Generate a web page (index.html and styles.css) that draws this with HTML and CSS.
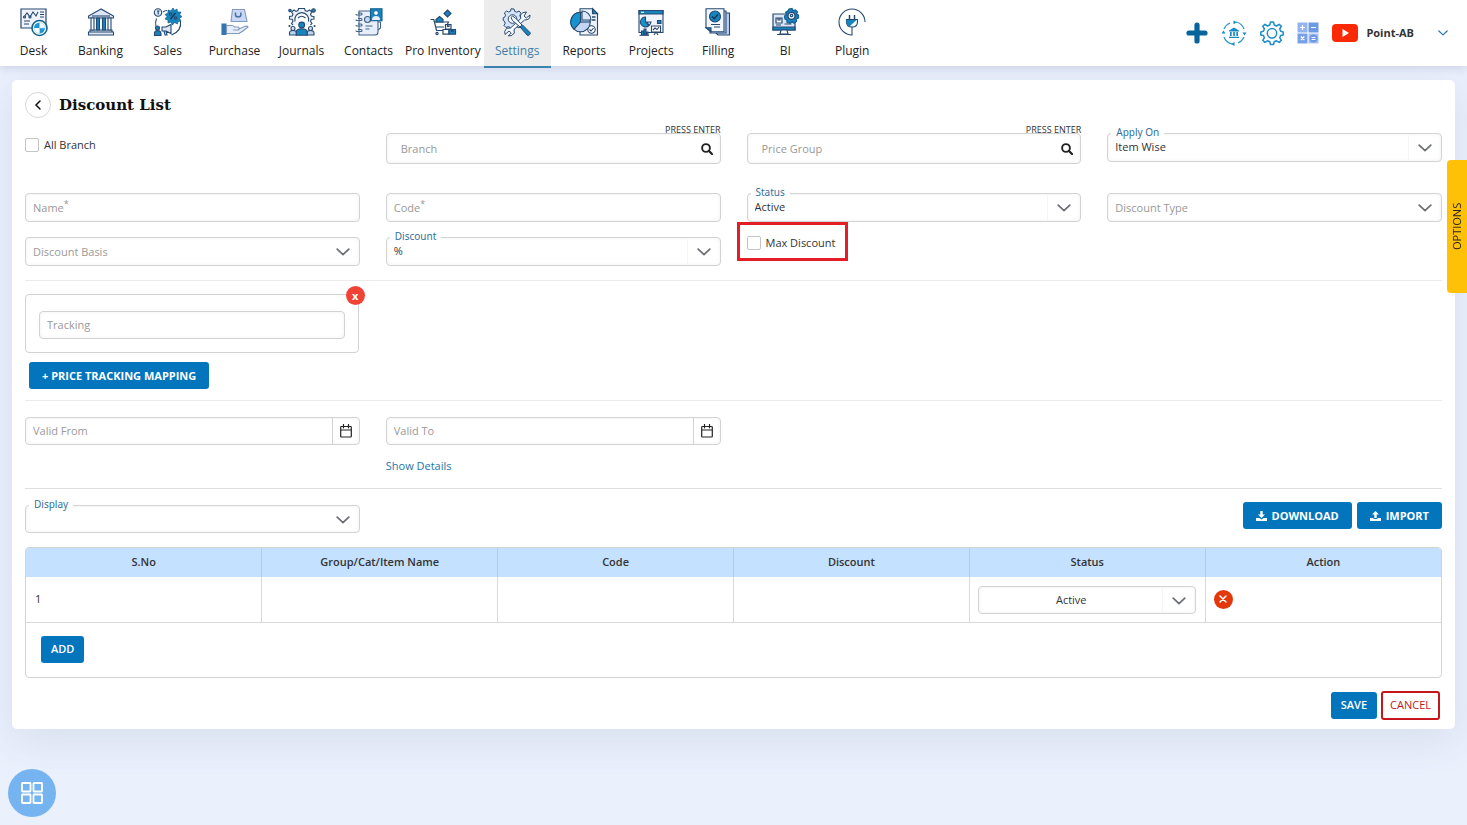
FILE: index.html
```html
<!DOCTYPE html>
<html lang="en">
<head>
<meta charset="utf-8">
<title>Discount List</title>
<meta name="viewport" content="width=device-width, initial-scale=1">
<link rel="stylesheet" href="styles.css">
</head>
<body>
<svg class="defs" aria-hidden="true">
  <symbol id="chevron" viewBox="0 0 14 8"><path d="M1.2 1.2 7 6.6l5.800-5.400" fill="none" stroke="currentColor" stroke-width="1.700" stroke-linecap="round" stroke-linejoin="round"/></symbol>
  <symbol id="search" viewBox="0 0 12 12"><circle cx="5" cy="5" r="3.900" fill="none" stroke="currentColor" stroke-width="1.900"/><path d="m8 8 3.200 3.200" stroke="currentColor" stroke-width="2.200" stroke-linecap="round"/></symbol>
  <symbol id="calendar" viewBox="0 0 12 14"><path d="M1.500 2.500h9q.8 0 .8.8v8.900q0 .8-.8.8h-9q-.8 0-.8-.8V3.300q0-.8.8-.8ZM.7 6h10.600M3.500.5v3.300M8.500.5v3.300" fill="none" stroke="currentColor" stroke-width="1.200" stroke-linecap="round"/></symbol>
</svg>

<header class="topbar">
  <nav class="nav" aria-label="Main">
    <a class="nav-item" href="#">
      <svg class="nav-icon" viewBox="0 0 28 28" fill="none" stroke="#27496f" stroke-width="1.200"><path fill="#eef3fd" d="M1 1h25v19H1z"/><path d="m4 9 3-4 3 4 3-5 3 4 2-4M20 4h4M20 6.500h4M20 9h4M4 13h6M4 16h5" stroke-width="1.100"/><circle cx="4.500" cy="9" r="1" fill="#fff"/><circle cx="10" cy="9" r="1" fill="#fff"/><circle cx="19.500" cy="20" r="7.500" fill="#fff" stroke="#14628f" stroke-width="1.600"/><path d="M19.500 14.500V20H14a5.500 5.500 0 0 1 5.500-5.500ZM19.500 25.500V20H25a5.500 5.500 0 0 1-5.500 5.500Z" fill="#1c96d2" stroke="none"/><path d="M19.500 14.500A5.500 5.500 0 0 1 25 20h-5.500M14 20a5.500 5.500 0 0 0 5.500 5.500V20" stroke="#a5d8f2" stroke-width=".8"/></svg>
      <span>Desk</span></a>
    <a class="nav-item" href="#">
      <svg class="nav-icon" viewBox="0 0 28 28" fill="none" stroke="#27496f" stroke-width="1.100"><path fill="#dce6f7" d="M14 1 1.500 8v2h25V8ZM1.500 24h25v3h-25ZM3 22h22v2H3Z"/><path d="M5 8h18" /><path fill="#f4f8ff" d="M4 10h3v12H4zM21 10h3v12h-3z"/><path fill="#1684bd" d="M9.500 10h3v12h-3zM15.500 10h3v12h-3z"/></svg>
      <span>Banking</span></a>
    <a class="nav-item" href="#">
      <svg class="nav-icon" viewBox="0 0 28 28" fill="none" stroke="#27496f" stroke-width="1.100"><path d="M2.500 10.500a13 13 0 0 0-.5 8M9 4q2-1.500 4-1.500M26.500 13q1.500 10-9 14"/><path d="m19 0 1.500 2.500L23 1l.5 3L27 4l-1.500 3 2.500 1.500-2.500 2L27 13l-3 .5-.5 2.500-3-1.500L18.500 17 17 14l-3 1v-3l-3-1 2-2.500-2-2L14 5V2l3 1Z" fill="#1684bd" stroke="#145d8d" stroke-width=".7"/><path d="m16.500 11 5-6" stroke="#163558" stroke-width="1.300"/><circle cx="16.500" cy="6" r="1.200"/><circle cx="21.500" cy="10" r="1.200"/><circle cx="4" cy="4.500" r="3.700" fill="#dce6f7"/><path d="M3 3h2.500M4.200 3v3.500"/><circle cx="3.500" cy="20" r="2" fill="#1684bd"/><path d="M.5 27.500v-2q0-3 3-3t3.500 3v2Z" fill="#1684bd"/><path d="M8 19h4l5-2.500v9L12 23H8ZM10 23l1 4h2l-1-4" fill="#dce6f7"/></svg>
      <span>Sales</span></a>
    <a class="nav-item" href="#">
      <svg class="nav-icon" viewBox="0 0 28 28" fill="none" stroke="#7f9abd" stroke-width="1.100"><path d="M11.500 1.500h12L26 13.500H10Z" fill="#c9d8f6"/><path d="M14.500 4.500v2.500q0 1.800 2.700 1.800t2.700-1.800V4.500" stroke="#47719d" stroke-width="1.500"/><path d="M1 16h4v10.500H1z" fill="#3475b0" stroke="#3475b0"/><path d="M5.500 17.500h5q2 0 3 1.500h3.500q1.500.3 1 2l6-2.700q2.500-.5 3 .7-4 3.500-9 6.500H5.500Z" fill="#e8eefb"/><path d="M12 22h5.500l.5-1"/></svg>
      <span>Purchase</span></a>
    <a class="nav-item" href="#">
      <svg class="nav-icon" viewBox="0 0 28 28" fill="none" stroke="#27496f" stroke-width="1.100"><path d="M5 17 3.500 15.500 5 13.300l-.8-2L1.500 11V8.500L4.200 8l.8-2-1.500-2L6 2l2 1.400L10 2.500l.5-2h6l.7 2L19.200 3.400 21.500 2 24 4l-1.500 2 .8 2 2.700.6V11l-2.700.3-.8 2 1.500 2.200L22.500 17" fill="#edf2fc"/><path d="M7 13.500a7 7 0 1 1 13.500 0" fill="#fff"/><path d="M10 10q3.500-3.500 7.500 0"/><g fill="#1684bd"><circle cx="2" cy="2.500" r="1.200"/><circle cx="25.500" cy="2.500" r="1.800"/><circle cx="1.500" cy="18" r=".5"/><circle cx="26.500" cy="18" r=".5"/></g><circle cx="5" cy="20.500" r="2" fill="#dce6f7"/><circle cx="22.500" cy="20.500" r="2" fill="#dce6f7"/><circle cx="13.700" cy="17" r="2.900" fill="#1684bd"/><path d="M1.500 27v-2q0-2.500 3.500-2.500t3.500 2.500v2ZM19 27v-2q0-2.500 3.500-2.500T26 25v2Z" fill="#bdd2f0"/><path d="M8.200 27.300v-3q0-3.500 5.500-3.500t5.500 3.500v3Z" fill="#1684bd"/></svg>
      <span>Journals</span></a>
    <a class="nav-item" href="#">
      <svg class="nav-icon" viewBox="0 0 28 28" fill="none" stroke="#446487" stroke-width="1.100"><path d="M4 3h16q3 0 3 3v18q0 3-3 3H4Z" fill="#e8effc"/><path d="M23 14h2.500v6L23 22M3 5h3q1 0 1 1T6 7H2q-1 0-1-1M3 10.500h3q1 0 1 1t-1 1H2q-1 0-1-1M3 16h3q1 0 1 1t-1 1H2q-1 0-1-1M3 21.500h3q1 0 1 1t-1 1H2q-1 0-1-1M10.500 18h7M10.500 21h4"/><circle cx="12.500" cy="11.500" r="3" fill="#c9daf3"/><path d="M15.500.7H27v12H15.500Z" fill="#1684bd" stroke="#145d8d"/><circle cx="21" cy="5" r="2.300" fill="#fff" stroke="#145d8d" stroke-width=".7"/><path d="M17 12q0-4 4-4t4 4Z" fill="#e8effc" stroke="none"/></svg>
      <span>Contacts</span></a>
    <a class="nav-item" href="#">
      <svg class="nav-icon" viewBox="0 0 28 28" fill="none" stroke="#27496f" stroke-width="1.200"><path d="M1.500 11.500h3.300l2.700 11H15M5.500 14H19.500L18.500 16M6.500 19H15"/><circle cx="8" cy="25.500" r="1.100"/><path d="M18.500 2 22 5.500 18.500 9 15 5.500Z" fill="#1684bd"/><path d="m10.500 8.500 3.500 3V14H7v-2.500Z" fill="#1684bd"/><path d="M16.500 16.500h5.500V21h-5.500ZM14 21.500h6v4.700h-6Z" fill="#fff"/><path d="M20 21.500h6.500v4.700H20Z" fill="#1684bd"/><path d="M18.500 16.500v2H20v-2M22.500 21.500v2H24v-2"/></svg>
      <span>Pro Inventory</span></a>
    <a class="nav-item is-active" href="#" aria-current="page">
      <svg class="nav-icon" viewBox="0 0 28 28" fill="none" stroke="#27496f" stroke-width="1"><path d="m8 .8 3 .2.7 2.400 2 .8 2.300-1.200 2 2.200-1.200 2.300.8 2 2.400.7v3l-2.400.7-.8 2 1.200 2-2 2-2.300-1.200-2 .8-.7 2.500H8l-.7-2.500-2-.8L3 19.500l-2-2 1.200-2.300-.8-2L.2 12.500V9.800l1.500-.6.9-2-1.200-2.300L3.500 3l2 1 2-.8Z" fill="#d6e3fa"/><circle cx="9.500" cy="11" r="4.300" fill="#f8faff"/><path d="m27 7-3.700 3-2.300-2 2.500-4q-4-.3-6 3l.3 3.500L7.500 20l-3.800.3Q.7 23 2 26.500L6 23l2.300 2-3 3q4 .5 6-3l-.3-3.500L21.500 12q6 0 5.500-5Z" fill="#f7faff"/><path d="M9.500 12.500 8 9.500l1.500-1.400L12.500 10l6.500 7-2 2Z" fill="#f7faff"/><path d="m17 19 2.500-2 7.500 7.500q.8 1-.5 2.300t-2.500.2Z" fill="#1684bd"/></svg>
      <span>Settings</span></a>
    <a class="nav-item" href="#">
      <svg class="nav-icon" viewBox="0 0 28 28" fill="none" stroke="#27496f" stroke-width="1.100"><path d="M10 .7h12.500l5 5V27H10Z" fill="#eef3fd"/><path d="M22.500.7v5h5Z" fill="#1684bd"/><path d="M22 9h3.500M22 12h3.500" stroke-width="1.500"/><circle cx="21.500" cy="21.500" r="3.700" fill="#fff"/><path d="m19.500 21.500 1.500 1.500 2.500-3"/><circle cx="10.500" cy="14" r="9.800" fill="#c5d6f4"/><path d="M10.500 4.200V14l-6.500 7.200A9.800 9.800 0 0 1 10.500 4.200Z" fill="#1794d0"/><path d="M10.500 14h9.800"/><path d="M12 3a9 9 0 0 1 9 9h-9Z" fill="#dfe9fb"/></svg>
      <span>Reports</span></a>
    <a class="nav-item" href="#">
      <svg class="nav-icon" viewBox="0 0 28 28" fill="none" stroke="#27496f" stroke-width="1.100"><path d="M2 2.500h24v22H2Z" fill="#f0f5fd"/><path d="M2 2.500h24V6H2Z" fill="#1684bd"/><path d="M4 4.300h3" stroke="#fff"/><path d="M8.500 9v5l3.500 3.500A5 5 0 1 1 8.500 9Z" fill="#1794d0"/><path d="M10 14h4a5 5 0 0 1-2 3.500Z" fill="#c5d6f4"/><path d="M20.500 12.500H24v3h-3.500Z" fill="#1684bd"/><path d="M14.500 18h9v6h-9ZM17 27l2-3 2 3M16 22l2-2 2 1.500 2-2.500" fill="#fff"/><path d="M4.500 27v-4h2v4M7 27v-6h2v6M9.500 27v-3h1.500v3" fill="#1684bd"/><path d="M2.500 27.300H12"/></svg>
      <span>Projects</span></a>
    <a class="nav-item" href="#">
      <svg class="nav-icon" viewBox="0 0 28 28" fill="none" stroke="#27496f" stroke-width="1.100"><path d="M9 5h16.500v22H14l-5-5Z" fill="#bdd0f3"/><path d="M6 3h16v22H6Z" fill="#cfdef8"/><path d="M2 .7h18v23H7l-5-4Z" fill="#f2f6fe"/><path d="M2 19.700h5v4Z" fill="#1684bd"/><circle cx="11" cy="8.500" r="5.500" fill="#1684bd"/><path d="m8 8.500 2.200 2.200L14 6.500" stroke="#163558" stroke-width="1.500"/><path d="M7 16.500h9M10 19h6"/></svg>
      <span>Filling</span></a>
    <a class="nav-item" href="#">
      <svg class="nav-icon" viewBox="0 0 28 28" fill="none" stroke="#27496f" stroke-width="1.200"><path d="M2 6h22v16H2Z" fill="#dce7fa"/><path d="M2 19h22v3H2Z" fill="#1684bd"/><path d="M10 22h6l1 4H9ZM6 26.500h14M5 10h6v5H5ZM7 10v2h2v-2M13.500 16h7M5 17h5" fill="#fff"/><path d="m18 1 3-.5 1 2 2.500-.5L26.500 4l-1 2 2 1.200V10l-2.300.8.3 2.500-2.500 2-2-1.500-2 1.500-3-1-.2-2.500L14 11l-.5-3 2-1.300-.8-2.400 2.300-1.500Z" fill="#1684bd" stroke="#145d8d"/><circle cx="20.500" cy="7.800" r="3.500" fill="#edf4ff"/><circle cx="20.500" cy="7.500" r="1.200"/></svg>
      <span>BI</span></a>
    <a class="nav-item" href="#">
      <svg class="nav-icon" viewBox="0 0 28 28" fill="none" stroke="#27496f" stroke-width="1.100"><path d="M27 14A13 13 0 1 0 14 27v-8"/><path d="M8.500 11.500h11V14q0 5-5.500 5t-5.500-5Z" fill="#f5f8ff"/><path d="M8.500 12h10l-7 6.500q-3-1.500-3-4.500Z" fill="#1684bd" stroke="none"/><path d="M11.500 7v4.500M16.500 7v4.500" stroke-width="1.500"/></svg>
      <span>Plugin</span></a>
  </nav>

  <div class="tools">
    <button class="tool" type="button" aria-label="Create"><svg width="22" height="22" viewBox="0 0 22 22"><path d="M11 3v16M3 11h16" stroke="#07659c" stroke-width="5.200" stroke-linecap="round"/></svg></button>
    <button class="tool" type="button" aria-label="Bank sync"><svg width="26" height="26" viewBox="0 0 26 26" fill="none" stroke="#2a98d0" stroke-width="1.200"><path d="M3 9a11 11 0 0 1 6-6M15 2a11 11 0 0 1 8 7M23 17a11 11 0 0 1-6 6M11 24a11 11 0 0 1-8-7" /><g fill="#168bc7" stroke="none"><path d="m12.500.5 3.500 1.700-3.500 2ZM21.500 12.500h4l-2 3ZM13.500 22v4L10 24ZM.5 13.500h4l-2-3ZM13 7.500l5 3v1H8v-1ZM9 12h1.700v4H9ZM12.200 12h1.700v4h-1.700ZM15.300 12H17v4h-1.700ZM8 16.700h10v1.300H8Z"/></g></svg></button>
    <button class="tool" type="button" aria-label="Preferences"><svg width="24" height="24" viewBox="0 0 24 24" fill="none" stroke="#1c8dc8" stroke-width="1.500" stroke-linejoin="round"><path d="M10.500 1h3l.7 3 2.300 1 2.700-1.700 2.100 2.100L19.700 8l1 2.300 2.500.6v3l-2.500.6-1 2.200 1.600 2.600-2.100 2.100-2.700-1.600-2.300 1-.7 2.700h-3l-.7-2.700-2.300-1-2.600 1.600-2.100-2.100 1.600-2.600-1-2.200-2.600-.6v-3l2.600-.6 1-2.300-1.600-2.600 2.100-2.100L7.500 5l2.300-1Z"/><circle cx="12" cy="12.300" r="4.700"/></svg></button>
    <button class="tool" type="button" aria-label="Calculator"><svg width="22" height="22" viewBox="0 0 22 22"><path d="M.5.5h10v10H.5z" fill="#92b3ef"/><path d="M11.500.5h10v10h-10z" fill="#6c9be5"/><path d="M.5 11.500h10v10H.5z" fill="#789fe8"/><path d="M11.500 11.500h10v10h-10z" fill="#a8c1f0"/><circle cx="16.500" cy="16.500" r="4" fill="#6c97e2"/><path d="M5.500 3v5M3 5.500h5M14 5.500h5M3.800 14.500l3.500 3.500M7.300 14.500 3.800 18M14.500 15.500h4M14.500 17.500h4" stroke="#fff" stroke-width="1.200"/></svg></button>
    <a class="tool" href="#" aria-label="Video tutorials"><svg width="26" height="18" viewBox="0 0 26 18"><rect width="26" height="18" rx="4" fill="#fb2a06"/><path d="m10.500 5 6.500 4-6.500 4Z" fill="#fff"/></svg></a>
    <button class="account" type="button"><span>Point-AB</span><svg width="10" height="6"><use href="#chevron"/></svg></button>
  </div>
</header>

<main class="card">
  <div class="title-row">
    <button class="back" type="button" aria-label="Back"><svg width="6" height="10" viewBox="0 0 6 10"><path d="M5 1 1 5l4 4" fill="none" stroke="#111" stroke-width="1.500" stroke-linecap="round"/></svg></button>
    <h1>Discount List</h1>
  </div>

  <form>
    <section class="grid scope-row">
      <label class="check check-branch"><input type="checkbox"><span>All Branch</span></label>
      <div class="field search">
        <span class="hint">PRESS ENTER</span>
        <input type="text" placeholder="Branch" aria-label="Branch">
        <button class="icon-btn" type="button" aria-label="Search branch"><svg width="12" height="12"><use href="#search"/></svg></button>
      </div>
      <div class="field search">
        <span class="hint">PRESS ENTER</span>
        <input type="text" placeholder="Price Group" aria-label="Price Group">
        <button class="icon-btn" type="button" aria-label="Search price group"><svg width="12" height="12"><use href="#search"/></svg></button>
      </div>
      <div class="field select split">
        <label class="float" for="apply">Apply On</label>
        <select id="apply"><option>Item Wise</option></select>
        <svg class="arrow"><use href="#chevron"/></svg>
      </div>
    </section>

    <section class="grid detail-rows">
      <div class="field"><input id="name" type="text" required><label class="inside" for="name">Name<sup>*</sup></label></div>
      <div class="field"><input id="code" type="text" required><label class="inside" for="code">Code<sup>*</sup></label></div>
      <div class="field select split">
        <label class="float" for="status">Status</label>
        <select id="status"><option>Active</option></select>
        <svg class="arrow"><use href="#chevron"/></svg>
      </div>
      <div class="field select">
        <select class="empty" aria-label="Discount Type"><option>Discount Type</option></select>
        <svg class="arrow"><use href="#chevron"/></svg>
      </div>
      <div class="field select">
        <select class="empty" aria-label="Discount Basis"><option>Discount Basis</option></select>
        <svg class="arrow"><use href="#chevron"/></svg>
      </div>
      <div class="field select split">
        <label class="float" for="discount">Discount</label>
        <select id="discount"><option>%</option></select>
        <svg class="arrow"><use href="#chevron"/></svg>
      </div>
      <div class="max-cell"><label class="check"><input type="checkbox"><span>Max Discount</span></label></div>
    </section>

    <section class="tracking">
      <div class="grid">
        <div class="tracking-box">
          <div class="field"><input type="text" placeholder="Tracking" aria-label="Tracking"></div>
          <button class="remove" type="button" aria-label="Remove tracking">x</button>
        </div>
      </div>
      <button class="btn btn-wide btn-mapping" type="button">+ PRICE TRACKING MAPPING</button>
    </section>

    <section class="grid validity">
      <div class="field date"><input type="text" placeholder="Valid From" aria-label="Valid From"><button class="icon-btn" type="button" aria-label="Pick start date"><svg width="12" height="14"><use href="#calendar"/></svg></button></div>
      <div class="valid-to">
        <div class="field date"><input type="text" placeholder="Valid To" aria-label="Valid To"><button class="icon-btn" type="button" aria-label="Pick end date"><svg width="12" height="14"><use href="#calendar"/></svg></button></div>
        <a class="details" href="#">Show Details</a>
      </div>
    </section>

    <section class="grid display-row">
      <div class="field select">
        <label class="float" for="display">Display</label>
        <select id="display"><option></option></select>
        <svg class="arrow"><use href="#chevron"/></svg>
      </div>
      <div class="transfer">
        <button class="btn btn-wide" type="button"><svg width="11" height="10" viewBox="0 0 11 10" fill="currentColor"><path d="M4.300 0h2.400v3.500h2.300L5.500 7 2 3.500h2.300ZM0 7h3.500l2 1.600L7.500 7H11v3H0Z"/></svg>DOWNLOAD</button>
        <button class="btn btn-wide" type="button"><svg width="11" height="10" viewBox="0 0 11 10" fill="currentColor"><path d="M4.300 7h2.400V3.500h2.300L5.500 0 2 3.500h2.300ZM0 7h3.500v1h4V7H11v3H0Z"/></svg>IMPORT</button>
      </div>
    </section>

    <div class="table-wrap">
      <table>
        <thead><tr><th>S.No</th><th>Group/Cat/Item Name</th><th>Code</th><th>Discount</th><th>Status</th><th>Action</th></tr></thead>
        <tbody><tr>
          <td>1</td><td></td><td></td><td></td>
          <td class="status-cell"><div class="field select split centered"><select aria-label="Row status"><option>Active</option></select><svg class="arrow"><use href="#chevron"/></svg></div></td>
          <td><button class="delete" type="button" aria-label="Delete row"><svg width="8" height="8" viewBox="0 0 8 8"><path d="m1 1 6 6M7 1 1 7" stroke="#fff" stroke-width="1.500" stroke-linecap="round"/></svg></button></td>
        </tr></tbody>
      </table>
      <div class="table-foot"><button class="btn" type="button">ADD</button></div>
    </div>

    <div class="actions">
      <button class="btn" type="submit">SAVE</button>
      <button class="btn btn-cancel" type="button">CANCEL</button>
    </div>
  </form>
</main>

<button class="options" type="button">OPTIONS</button>
<button class="launcher" type="button" aria-label="Apps"><svg width="24" height="24" viewBox="0 0 24 24" fill="none" stroke="#fff" stroke-width="1.800"><rect x="2" y="2" width="8.500" height="8.500" rx=".5"/><rect x="13.500" y="2" width="8.500" height="8.500" rx=".5"/><rect x="2" y="13.500" width="8.500" height="8.500" rx=".5"/><rect x="13.500" y="13.500" width="8.500" height="8.500" rx=".5"/></svg></button>
</body>
</html>
```

FILE: styles.css
```css
*, ::before, ::after { box-sizing: border-box; }

body {
  margin: 0;
  min-height: 100vh;
  background: #eaf0fc;
  color: #333;
  font: 11px/16px "Open Sans", "Noto Sans", sans-serif;
}

button, input, select { font: inherit; color: inherit; }
button { padding: 0; border: 0; background: none; cursor: pointer; }
a { color: inherit; text-decoration: none; }
svg { display: block; overflow: visible; }
.defs { position: absolute; width: 0; height: 0; }

/* Top bar */
.topbar {
  position: relative;
  display: flex;
  justify-content: space-between;
  height: 66px;
  background: #fff;
  box-shadow: 0 2px 8px rgba(60, 80, 120, .18);
}
.nav { display: flex; }
.nav-item {
  display: flex;
  flex-direction: column;
  align-items: center;
  gap: 7px;
  min-width: 67px;
  padding: 8px 3px 0;
  color: #222;
  font-size: 12px;
  font-weight: 500;
  white-space: nowrap;
}
.nav-icon { width: 28px; height: 28px; }
.nav-item.is-active { background: #ececec; color: #3f7da8; box-shadow: 0 2px 0 #3b82ae; }

.tools { display: flex; align-items: center; gap: 13px; padding-right: 19px; }
.tool { display: block; }
.account { display: flex; align-items: center; gap: 24px; margin-left: -5px; font-weight: 700; }
.account svg { color: #2577ad; }

/* Card */
.card {
  margin: 14px 12px 0;
  padding: 12px 13px 9px;
  border-radius: 5px;
  background: #fff;
  box-shadow: 0 10px 40px rgba(70, 90, 130, .12);
}
.title-row { display: flex; align-items: center; gap: 8px; }
.back {
  display: grid;
  place-items: center;
  width: 26px;
  height: 26px;
  border: 1px solid #d6d6d6;
  border-radius: 50%;
}
h1 { margin: 0; color: #111; font: 700 15px/24px "DejaVu Serif", serif; }

.grid { display: grid; grid-template-columns: repeat(4, 1fr); column-gap: 26px; align-items: start; }
.scope-row { padding: 15px 0 29px; }
.detail-rows { row-gap: 15px; padding-bottom: 14px; border-bottom: 1px solid #ebebeb; }

/* Fields */
.field {
  position: relative;
  display: flex;
  height: 29px;
  border: 1px solid #d3d3d3;
  border-radius: 4px;
  background: #fff;
  box-shadow: inset 0 0 4px rgba(0, 0, 0, .06);
}
.field input, .field select {
  flex: 1;
  min-width: 0;
  padding: 0 7px;
  border: 0;
  outline: 0;
  background: transparent;
}
.field select { appearance: none; cursor: pointer; }
.field select.empty, .inside, .field input::placeholder { color: #999; opacity: 1; }
.search { height: 31px; }
.search input { padding-left: 14px; }
.icon-btn { display: grid; place-items: center; width: 26px; color: #222; }
.hint { position: absolute; top: -10px; right: -1px; color: #333; font-size: 9px; line-height: 12px; }
.float {
  position: absolute;
  top: -10px;
  left: 3px;
  padding: 0 5px;
  background: linear-gradient(#fff 12px, transparent 12px);
  color: #356f9b;
  font-family: "Noto Sans", sans-serif;
  font-size: 10px;
  pointer-events: none;
}
.inside { position: absolute; top: 6px; left: 7px; pointer-events: none; }
.inside sup { font-family: "Noto Sans", sans-serif; font-size: 9px; line-height: 0; }
.arrow {
  position: absolute;
  top: 10px;
  right: 9px;
  width: 14px;
  height: 8px;
  color: #6b6f73;
  pointer-events: none;
}
.split::after {
  content: "";
  position: absolute;
  top: 1px;
  bottom: 1px;
  right: 32px;
  border-right: 1px solid #f5f5f5;
}
.split select { padding-bottom: 1px; }
.centered select { padding: 0 38px 0 7px; text-align-last: center; }

.date, .display-row .field, .tracking-box .field, .centered { height: 28px; }
.date .icon-btn { width: 27px; border-left: 1px solid #d3d3d3; }

.check { display: inline-flex; align-items: center; gap: 5px; cursor: pointer; }
.check input {
  appearance: none;
  width: 14px;
  height: 14px;
  margin: 0;
  border: 1px solid #c4c4c4;
  border-radius: 2px;
  background: #fff;
}
.check-branch { justify-self: start; margin-top: 4px; }
.max-cell { position: relative; display: flex; }
.max-cell .check { margin-top: -2px; }
.max-cell::after {
  content: "";
  position: absolute;
  top: -15px;
  left: -10px;
  width: 111px;
  height: 39px;
  border: 3px solid #e31e26;
  pointer-events: none;
}

/* Tracking */
.tracking { padding: 13px 0 11px; border-bottom: 1px solid #ebebeb; }
.tracking-box {
  position: relative;
  margin-right: 1px;
  padding: 16px 13px 13px;
  border: 1px solid #d3d3d3;
  border-radius: 4px;
}
.remove {
  position: absolute;
  top: -9px;
  right: -7px;
  width: 19px;
  height: 19px;
  border-radius: 50%;
  background: #f04336;
  color: #fff;
  font-weight: 700;
  line-height: 18px;
}

/* Buttons */
.btn {
  height: 27px;
  padding: 0 10px;
  border-radius: 3px;
  background: #0275bd;
  color: #fff;
  font-weight: 600;
  white-space: nowrap;
}
.btn-wide { display: inline-flex; align-items: center; gap: 5px; padding: 0 13px; font-weight: 700; }
.btn-mapping { margin: 9px 0 0 4px; }
.btn-cancel { height: 29px; padding: 0 7px; border: 2px solid #c5161d; background: #fff; color: #c5161d; font-weight: 500; }

.validity { padding: 16px 0 14px; border-bottom: 1px solid #dedede; }
.details { display: inline-block; margin-top: 13px; color: #2374ab; }

.display-row { padding: 16px 0 14px; }
.transfer { grid-column: 2 / -1; display: flex; justify-content: flex-end; gap: 5px; margin-top: -3px; }

/* Table */
.table-wrap { border: 1px solid #d3d3d3; border-radius: 4px; overflow: hidden; }
table { width: 100%; border-collapse: collapse; table-layout: fixed; }
th { height: 29px; padding: 0 0 1px; background: #c4e1ff; font-weight: 600; }
th + th { border-left: 1px solid #b0cee9; }
td { height: 45px; padding: 0 9px; border-bottom: 1px solid #d9d9d9; }
td + td { padding: 0 9px 0 8px; border-left: 1px solid #d9d9d9; }
td.status-cell { padding-top: 2px; }
.delete {
  display: grid;
  place-items: center;
  width: 19px;
  height: 19px;
  border-radius: 50%;
  background: #e2380c;
}
.table-foot { display: flex; padding: 13px 15px 14px; }

.actions { display: flex; align-items: center; justify-content: flex-end; gap: 4px; padding: 13px 2px 0 0; }

/* Floating controls */
.options {
  position: fixed;
  top: 160px;
  right: 0;
  width: 20px;
  height: 133px;
  border-radius: 0 4px 4px 0;
  background: #ffc107;
  color: #222;
  writing-mode: vertical-rl;
  transform: rotate(180deg);
}
.launcher {
  position: fixed;
  bottom: 8px;
  left: 8px;
  display: grid;
  place-items: center;
  width: 48px;
  height: 48px;
  border-radius: 50%;
  background: #76b4f1;
}
```
